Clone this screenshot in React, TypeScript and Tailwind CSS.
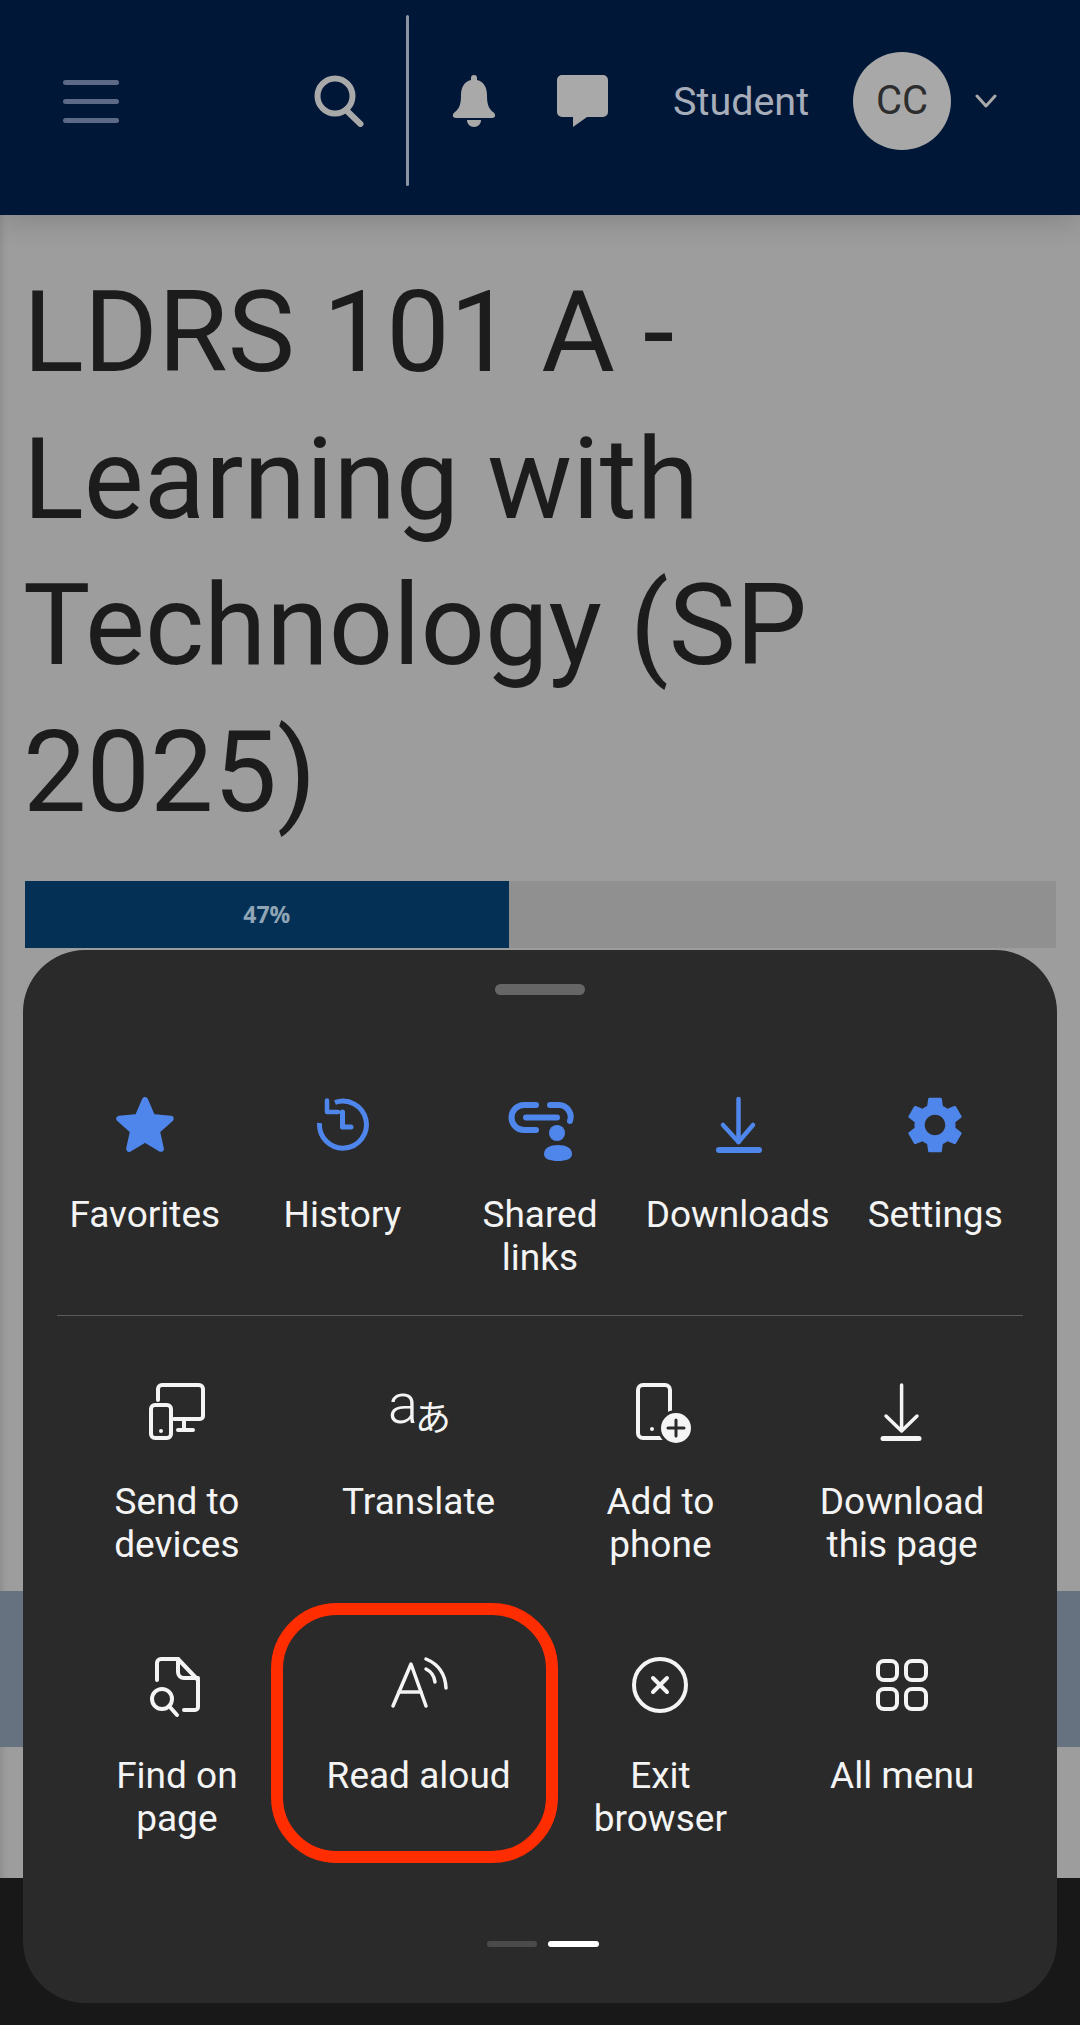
const blue = '#4f86ec';
const white = '#f4f4f4';
const dark = '#2a2a2a';

function StarIcon() {
  return (
    <svg width="80" height="80" viewBox="0 0 80 80">
      <polygon
        points="40,10 47.3,26.9 65.7,28.7 51.9,40.9 55.9,58.8 40,49.5 24.1,58.8 28.1,40.9 14.3,28.7 32.7,26.9"
        fill={blue}
        stroke={blue}
        strokeWidth="6"
        strokeLinejoin="round"
      />
    </svg>
  );
}

function HistoryIcon() {
  return (
    <svg width="80" height="80" viewBox="0 0 80 80" fill="none" stroke={blue} strokeWidth="5">
      <path d="M33 12.500A23.500 23.500 0 1 1 17.500 33" />
      <path d="M25 10.500V22H36" strokeWidth="4.500" strokeLinecap="round" strokeLinejoin="round" />
      <path d="M40.500 22V37H49" strokeLinecap="round" strokeLinejoin="round" />
    </svg>
  );
}

function SharedLinksIcon() {
  return (
    <svg width="80" height="80" viewBox="0 0 80 80" fill="none" stroke={blue} strokeWidth="6" strokeLinecap="round">
      <path d="M36 15H24a12.500 12.500 0 0 0 0 25H36" />
      <path d="M50 15H59a12 12 0 0 1 11 16" />
      <path d="M26 27.500H57" />
      <circle cx="57" cy="43" r="8" fill={blue} stroke="none" />
      <path d="M44 64c0-6 6-9 14-9s14 3 14 9c0 5-6 7-14 7s-14-2-14-7z" fill={blue} stroke="none" />
    </svg>
  );
}

function DownloadIcon({ color, thin }: { color: string; thin?: boolean }) {
  if (thin) {
    return (
      <svg width="80" height="80" viewBox="0 0 80 80" fill="none" stroke={color} strokeWidth="3.500" strokeLinecap="round" strokeLinejoin="round">
        <path d="M39.600 5V50" />
        <path d="M24 36L39.600 51L55 36" />
        <path d="M21 58.500H57" strokeWidth="5" />
      </svg>
    );
  }
  return (
    <svg width="80" height="80" viewBox="0 0 80 80" fill="none" stroke={color} strokeWidth="4.500" strokeLinecap="round" strokeLinejoin="round">
      <path d="M40.500 9V52" />
      <path d="M25 35L40.500 52L55 35" />
      <path d="M21 60H61" strokeWidth="6" />
    </svg>
  );
}

function SettingsIcon() {
  return (
    <svg width="80" height="80" viewBox="0 0 80 80">
      <g transform="translate(40 35) scale(2.85) translate(-12 -12)">
        <path
          fill={blue}
          fillRule="evenodd"
          d="M19.14 12.94c.04-.3.06-.61.06-.94 0-.32-.02-.64-.07-.94l2.03-1.58c.18-.14.23-.41.12-.61l-1.92-3.32c-.12-.22-.37-.29-.59-.22l-2.39.96c-.5-.38-1.03-.7-1.62-.94l-.36-2.54c-.04-.24-.24-.41-.48-.41h-3.84c-.24 0-.43.17-.47.41l-.36 2.54c-.59.24-1.13.57-1.62.94l-2.39-.96c-.22-.08-.47 0-.59.22L2.74 8.87c-.12.21-.08.47.12.61l2.03 1.58c-.05.3-.09.63-.09.94s.02.64.07.94l-2.03 1.58c-.18.14-.23.41-.12.61l1.92 3.32c.12.22.37.29.59.22l2.39-.96c.5.38 1.03.7 1.62.94l.36 2.54c.05.24.24.41.48.41h3.84c.24 0 .44-.17.47-.41l.36-2.54c.59-.24 1.13-.56 1.62-.94l2.39.96c.22.08.47 0 .59-.22l1.92-3.32c.12-.22.07-.47-.12-.61l-2.01-1.58zM12 15.6c-1.98 0-3.6-1.62-3.6-3.6s1.62-3.6 3.6-3.6 3.6 1.62 3.6 3.6-1.62 3.6-3.6 3.6z"
        />
      </g>
    </svg>
  );
}

function SendIcon() {
  return (
    <svg width="80" height="80" viewBox="0 0 80 80" fill="none" stroke={white} strokeWidth="4" strokeLinecap="round" strokeLinejoin="round">
      <path d="M21 20V9a4 4 0 0 1 4-4H62a4 4 0 0 1 4 4V36a3 3 0 0 1-3 3H37" />
      <rect x="14" y="25" width="20" height="33" rx="4" />
      <circle cx="24" cy="51" r="2" fill={white} stroke="none" />
      <path d="M47 39V50M41 50H56" />
    </svg>
  );
}

function TranslateIcon() {
  return (
    <svg width="80" height="80" viewBox="0 0 80 80" fill={white}>
      <text x="9" y="43" fontSize="56" fontWeight="300" fontFamily="Roboto, sans-serif">a</text>
      <text x="36" y="51" fontSize="36" fontFamily="'Noto Sans CJK JP', sans-serif">あ</text>
    </svg>
  );
}

function AddPhoneIcon() {
  return (
    <svg width="80" height="80" viewBox="0 0 80 80" fill="none" stroke={white} strokeWidth="4" strokeLinecap="round">
      <rect x="18" y="5" width="32" height="53" rx="5" />
      <circle cx="32" cy="49" r="2" fill={white} stroke="none" />
      <circle cx="56" cy="48" r="18" fill={dark} stroke="none" />
      <circle cx="56" cy="48" r="15" fill={white} stroke="none" />
      <path d="M56 40V56M48 48H64" stroke={dark} strokeWidth="3" />
    </svg>
  );
}

function FindIcon() {
  return (
    <svg width="80" height="80" viewBox="0 0 80 80" fill="none" stroke={white} strokeWidth="4" strokeLinecap="round" strokeLinejoin="round">
      <path d="M20 26V9a4 4 0 0 1 4-4H41L61 26V53a3 3 0 0 1-3 3H47" />
      <path d="M41 5V18a6 6 0 0 0 6 6H61" />
      <circle cx="25" cy="45" r="10" />
      <path d="M32 52L40 61" />
    </svg>
  );
}

function ReadAloudIcon() {
  return (
    <svg width="80" height="80" viewBox="0 0 80 80" fill="none" stroke={white} strokeWidth="3.500" strokeLinecap="round" strokeLinejoin="round">
      <path d="M14 52L32 10L47 52" />
      <path d="M20 38H42" />
      <path d="M47 15Q55 19 56 28" />
      <path d="M47 5Q66 13 67 34" />
    </svg>
  );
}

function ExitIcon() {
  return (
    <svg width="80" height="80" viewBox="0 0 80 80" fill="none" stroke={white} strokeWidth="4" strokeLinecap="round">
      <circle cx="40" cy="31" r="26" />
      <path d="M33 24L47 38M47 24L33 38" />
    </svg>
  );
}

function AllMenuIcon() {
  return (
    <svg width="80" height="80" viewBox="0 0 80 80" fill="none" stroke={white} strokeWidth="4">
      <rect x="16" y="7" width="19" height="19" rx="6" />
      <rect x="44" y="7" width="20" height="19" rx="6" />
      <rect x="16" y="35" width="19" height="20" rx="6" />
      <rect x="44" y="35" width="20" height="20" rx="6" />
    </svg>
  );
}

function MenuItem({ icon, label, iconHeight }: { icon: React.ReactNode; label: string; iconHeight: string }) {
  return (
    <div className="flex flex-col items-center">
      <div className={iconHeight}>{icon}</div>
      <div className="text-[37px] leading-[43px] text-[#f4f4f4] text-center whitespace-pre-line">{label}</div>
    </div>
  );
}

function Header() {
  return (
    <header className="relative z-10 h-[215px] bg-[#001737] flex items-center shadow-[0_6px_28px_rgba(0,0,0,0.16)]">
      <div className="ml-[63px] w-[56px] flex flex-col gap-[14px] mt-[-13px]">
        <div className="h-[5px] rounded-full bg-[#5c6a85]" />
        <div className="h-[5px] rounded-full bg-[#5c6a85]" />
        <div className="h-[5px] rounded-full bg-[#5c6a85]" />
      </div>
      <svg className="ml-[194px] mt-[-14px]" width="52" height="52" viewBox="0 0 52 52" fill="none" stroke="#a9a9a9" strokeWidth="6">
        <circle cx="22" cy="21" r="17.5" />
        <path d="M33 35L47.5 49" strokeLinecap="round" />
      </svg>
      <div className="ml-[41px] w-[3px] h-[171px] bg-[#8d94a3] rounded-full mt-[-15px]" />
      <svg className="ml-[43px] mt-[-14px]" width="44" height="52" viewBox="0 0 44 52" fill="#a9a9a9">
        <path d="M22 0a3 3 0 0 1 3 3V5c7 1.5 10 8 10 15 0 8 1 13 6 17 3 2 3 6-1 6H4c-4 0-4-4-1-6 5-4 6-9 6-17 0-7 3-13.500 10-15V3a3 3 0 0 1 3-3z" />
        <path d="M15 45H29c0 4-3 7-7 7s-7-3-7-7z" />
      </svg>
      <svg className="ml-[61px] mt-[-14px]" width="51" height="52" viewBox="0 0 51 52" fill="#a9a9a9">
        <path d="M5 0H46a5 5 0 0 1 5 5V37a5 5 0 0 1-5 5H30L16 52V42H5a5 5 0 0 1-5-5V5a5 5 0 0 1 5-5z" />
      </svg>
      <span className="ml-[65px] mt-[-12px] text-[39.5px] leading-none text-[#a7adb9]">Student</span>
      <div className="ml-[44px] mt-[-14px] w-[98px] h-[98px] rounded-full bg-[#a8a8a8] flex items-center justify-center text-[40px] text-[#2d2d2d]">
        CC
      </div>
      <svg className="ml-[24px] mt-[-14px]" width="22" height="14" viewBox="0 0 22 14" fill="none" stroke="#a9a9a9" strokeWidth="3" strokeLinecap="round" strokeLinejoin="round">
        <path d="M2 2L11 12L20 2" />
      </svg>
    </header>
  );
}

function PageBehind() {
  return (
    <main className="h-[1663px] bg-[#9d9d9d] pt-[45px] pl-[25px] pr-[24px] shadow-[inset_8px_0_6px_-6px_rgba(0,0,0,0.12)]">
      <h1 className="ml-[-2px] text-[113px] leading-[146.7px] text-[#1c1c1c] font-normal">
        LDRS 101 A - Learning with Technology (SP 2025)
      </h1>
      <div className="mt-[34px] h-[67px] bg-[#909090]">
        <div className="w-[46.9%] h-full bg-[#033054] flex items-center justify-center font-['Open_Sans',sans-serif] font-bold text-[23px] text-[#8fa5b5]">
          47%
        </div>
      </div>
      <div className="mt-[643px] ml-[-25px] mr-[-24px] h-[156px] bg-[#677280]" />
    </main>
  );
}

function BottomSheet() {
  return (
    <section className="absolute left-[23px] top-[950px] w-[1034px] h-[1053px] rounded-[62px] bg-[#2a2a2a]">
      <div className="mx-auto mt-[34px] w-[90px] h-[11px] rounded-full bg-[#666666]" />

      <div className="mx-[23px] mt-[95px] grid grid-cols-5">
        <MenuItem icon={<StarIcon />} label="Favorites" iconHeight="h-[103px]" />
        <MenuItem icon={<HistoryIcon />} label="History" iconHeight="h-[103px]" />
        <MenuItem icon={<SharedLinksIcon />} label={'Shared\nlinks'} iconHeight="h-[103px]" />
        <MenuItem icon={<DownloadIcon color={blue} />} label="Downloads" iconHeight="h-[103px]" />
        <MenuItem icon={<SettingsIcon />} label="Settings" iconHeight="h-[103px]" />
      </div>

      <div className="mx-[34px] mt-[36px] h-[1px] bg-[#5a5a5a]" />

      <div className="ml-[33px] mr-[34px] mt-[64px] grid grid-cols-4 gap-y-[88px]">
        <MenuItem icon={<SendIcon />} label={'Send to\ndevices'} iconHeight="h-[100px]" />
        <MenuItem icon={<TranslateIcon />} label="Translate" iconHeight="h-[100px]" />
        <MenuItem icon={<AddPhoneIcon />} label={'Add to\nphone'} iconHeight="h-[100px]" />
        <MenuItem icon={<DownloadIcon color={white} thin />} label={'Download\nthis page'} iconHeight="h-[100px]" />
        <MenuItem icon={<FindIcon />} label={'Find on\npage'} iconHeight="h-[100px]" />
        <MenuItem icon={<ReadAloudIcon />} label="Read aloud" iconHeight="h-[100px]" />
        <MenuItem icon={<ExitIcon />} label={'Exit\nbrowser'} iconHeight="h-[100px]" />
        <MenuItem icon={<AllMenuIcon />} label="All menu" iconHeight="h-[100px]" />
      </div>

      <div className="mt-[101px] flex justify-center gap-[11px] ml-[5px]">
        <div className="w-[50px] h-[6px] rounded-full bg-[#4a4a4a]" />
        <div className="w-[51px] h-[6px] rounded-full bg-white" />
      </div>

      {/* red highlight drawn over the Read aloud tile */}
      <div className="absolute left-[248px] top-[653px] w-[287px] h-[260px] rounded-[66px] border-[12px] border-[#ff2d00]" />
    </section>
  );
}

export default function App() {
  return (
    <div className="relative w-[1080px] h-[2025px] overflow-hidden bg-[#181818] font-[Roboto,sans-serif]">
      <Header />
      <PageBehind />
      <BottomSheet />
    </div>
  );
}
